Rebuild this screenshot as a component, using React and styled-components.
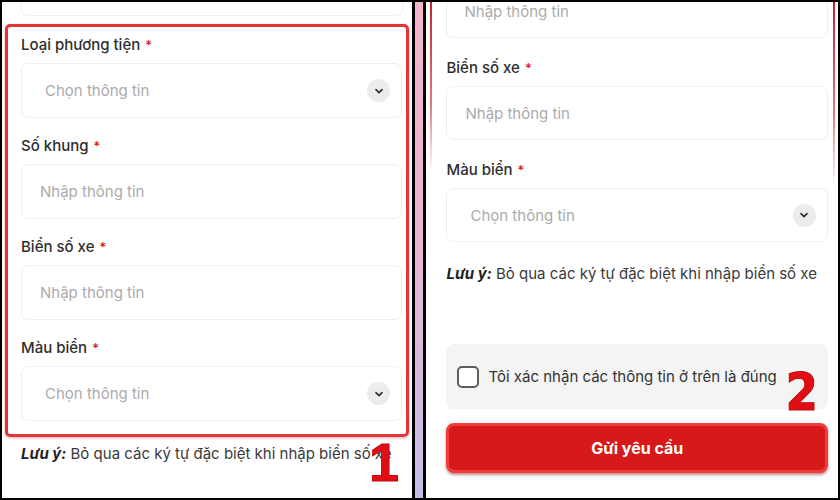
import React from 'react';
import styled, { createGlobalStyle } from 'styled-components';

const GlobalStyle = createGlobalStyle`
  html, body {
    margin: 0;
    padding: 0;
    background: #000;
  }
  body {
    font-family: Inter, "Noto Sans", "Liberation Sans", sans-serif;
  }
`;

const Frame = styled.div`
  width: 840px;
  height: 500px;
  box-sizing: border-box;
  padding: 2px;
  display: flex;
  background: #000;
  overflow: hidden;
`;

const Panel = styled.div`
  position: relative;
  width: ${p => p.$width}px;
  height: 100%;
  background: #fff;
  overflow: hidden;
  box-sizing: border-box;
  padding: ${p => p.$pad};
  display: flex;
  flex-direction: column;
`;

const Divider = styled.div`
  width: 8px;
  margin: 0 3px 0 3px;
  background: linear-gradient(180deg, #f3b4cb 0%, #e7b6d3 50%, #c4bde8 100%);
`;

const Highlight = styled.div`
  border: 3px solid #e5333a;
  border-radius: 5px;
  padding: 8px 4px 13px 13px;
  display: flex;
  flex-direction: column;
  gap: 18px;
  box-shadow: 0 1px 3px rgba(180, 20, 20, 0.35);
`;

const FieldList = styled.div`
  display: flex;
  flex-direction: column;
  gap: ${p => p.$gap}px;
`;

const Field = styled.div`
  display: flex;
  flex-direction: column;
  gap: 8px;
`;

const Label = styled.div`
  font-size: 15px;
  line-height: 20px;
  font-weight: 500;
  color: #2e2e2e;
`;

const Star = styled.span`
  color: #d4141c;
  margin-left: 5px;
  font-size: 13px;
  vertical-align: top;
`;

const Box = styled.div`
  height: ${p => p.$h || 55}px;
  box-sizing: border-box;
  border: 1px solid #efefef;
  border-radius: 7px;
  display: flex;
  align-items: center;
  justify-content: space-between;
  padding: 0 ${p => (p.$select ? 11 : 12)}px 0 ${p => (p.$select ? 23 : 18)}px;
  font-size: 15px;
  color: #ababab;
  margin: ${p => p.$margin || 0};
  flex-shrink: 0;
`;

const Chevron = styled.span`
  width: 23px;
  height: 23px;
  border-radius: 50%;
  background: #ececec;
  display: flex;
  align-items: center;
  justify-content: center;
`;

const Note = styled.div`
  font-size: 15px;
  line-height: 20px;
  color: #3a3a3a;
  margin: ${p => p.$margin};
  white-space: nowrap;
  & b {
    font-style: italic;
    font-weight: 700;
    color: #222;
  }
`;

const ConfirmBox = styled.div`
  margin-top: 60px;
  height: 65px;
  border-radius: 8px;
  background: #f4f4f4;
  display: flex;
  align-items: center;
  gap: 9px;
  padding-left: 11px;
  font-size: 15px;
  color: #333;
`;

const Check = styled.span`
  width: 22px;
  height: 22px;
  box-sizing: border-box;
  border: 2px solid #5e5e5e;
  border-radius: 5px;
  background: #fff;
`;

const SubmitButton = styled.button`
  margin-top: 14px;
  height: 50px;
  border: 3px solid #f13a3a;
  border-radius: 8px;
  background: #d7191a;
  color: #fff;
  font-family: inherit;
  font-size: 16px;
  font-weight: 700;
  box-shadow: 0 2px 3px rgba(120, 0, 0, 0.45);
`;

const StepNumber = styled.span`
  position: absolute;
  left: ${p => p.$x}px;
  top: ${p => p.$y}px;
  font-family: ${p => p.$font};
  font-weight: 700;
  font-size: ${p => p.$size}px;
  line-height: 1;
  color: #e10f14;
  -webkit-text-stroke: 1px #c4080c;
`;

const EdgeLine = styled.div`
  position: absolute;
  top: 0;
  left: ${p => p.$x}px;
  width: 2px;
  height: ${p => p.$h}px;
  background: linear-gradient(180deg, #c8222a 0%, rgba(200, 34, 42, 0.6) 60%, rgba(200, 34, 42, 0) 100%);
`;

function ChevronIcon() {
  return (
    <Chevron>
      <svg width="10" height="10" viewBox="0 0 10 10" fill="none">
        <path d="M2 3.6 L5 6.6 L8 3.6" stroke="#333" strokeWidth="1.7" strokeLinecap="round" strokeLinejoin="round" />
      </svg>
    </Chevron>
  );
}

function FormField({ label, select, h }) {
  return (
    <Field>
      <Label>
        {label}
        <Star>*</Star>
      </Label>
      <Box $select={select} $h={h}>
        <span>{select ? 'Chọn thông tin' : 'Nhập thông tin'}</span>
        {select && <ChevronIcon />}
      </Box>
    </Field>
  );
}

export default function App() {
  return (
    <Frame>
      <GlobalStyle />
      <Panel $width={411} $pad="0 3px">
        <Box $margin="-41px 6px 8px 16px" />
        <Highlight>
          <FormField label="Loại phương tiện" select />
          <FormField label="Số khung" />
          <FormField label="Biển số xe" />
          <FormField label="Màu biển" select />
        </Highlight>
        <Note $margin="7px 0 0 16px">
          <b>Lưu ý:</b> Bỏ qua các ký tự đặc biệt khi nhập biển số xe
        </Note>
        <StepNumber $x={367} $y={433} $size={54} $font={'"Liberation Sans", Arial, sans-serif'}>1</StepNumber>
      </Panel>
      <Divider />
      <Panel $width={412} $pad="0 10px 0 20px">
        <EdgeLine $x={4} $h={170} />
        <EdgeLine $x={407} $h={185} />
        <FieldList $gap={20}>
          <Box $margin="-18px 0 0 0" $h={54}>
            <span style={{ marginLeft: -1 }}>Nhập thông tin</span>
          </Box>
          <FormField label="Biển số xe" h={54} />
          <FormField label="Màu biển" select h={54} />
        </FieldList>
        <Note $margin="22px 0 0 0">
          <b>Lưu ý:</b> Bỏ qua các ký tự đặc biệt khi nhập biển số xe
        </Note>
        <ConfirmBox>
          <Check />
          Tôi xác nhận các thông tin ở trên là đúng
        </ConfirmBox>
        <SubmitButton>Gửi yêu cầu</SubmitButton>
        <StepNumber $x={359} $y={364} $size={52} $font={'"DejaVu Sans Condensed", "DejaVu Sans", sans-serif'}>2</StepNumber>
      </Panel>
    </Frame>
  );
}
